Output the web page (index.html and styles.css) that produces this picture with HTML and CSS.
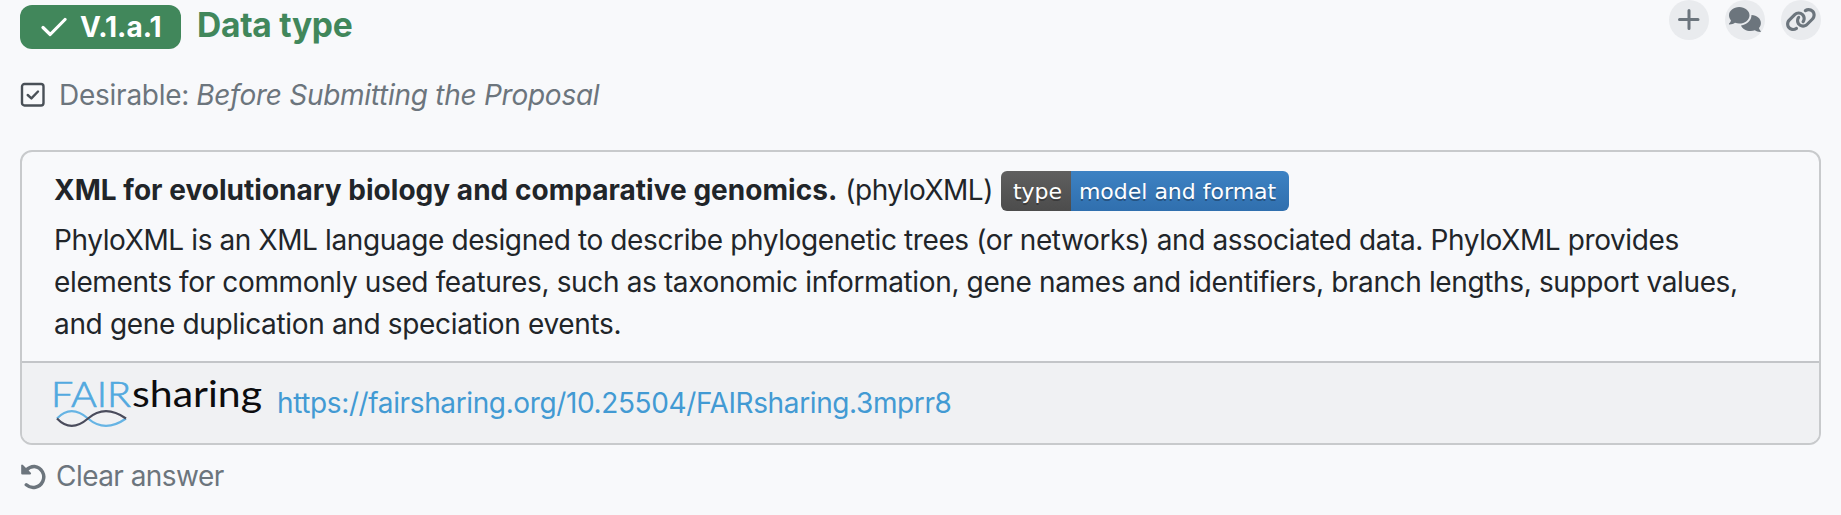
FILE: index.html
```html
<!DOCTYPE html>
<html lang="en">
<head>
<meta charset="utf-8">
<title>Data type</title>
<link rel="stylesheet" href="styles.css">
</head>
<body>
<main class="question">
  <header class="head">
    <span class="number"><svg class="check" viewBox="0 0 26 20"><path d="M2 10.500L9.200 17.500L24 2.500"/></svg><span class="number-text">V.1.a.1</span></span>
    <h1 class="title"><span class="title-text">Data type</span></h1>
    <nav class="actions">
      <a class="action"><svg viewBox="0 0 40 40"><path class="line" d="M20 10.500V28.500M10.500 19.500H29"/></svg></a>
      <a class="action"><svg viewBox="0 0 40 40"><path class="fill" d="M14.200 7C8.600 7 4 10.700 4 15.300c0 2 .8 3.700 2 5.100-.3 1.200-1 2.200-1.900 3-.4.500-.1 1.100.5 1.100 2.100 0 4-.8 5.400-1.700 1.300.5 2.700.8 4.200.8 5.700 0 10.300-3.700 10.300-8.300S19.900 7 14.200 7z"/><path class="fill" d="M26.500 15.100c0 5.500-4.700 9.900-10.500 10.400 1.300 3.200 5.200 5.600 9.700 5.600 1.600 0 3-.3 4.200-.8 1.500 1 3.300 1.700 5.300 1.700.6 0 .8-.6.4-1.100-.8-.8-1.400-1.800-1.700-2.900 1.300-1.400 2-3.200 2-5.100 0-4.100-4-7.600-9.400-7.800z"/></svg></a>
      <a class="action"><svg viewBox="0 0 40 40"><path class="fill" transform="translate(4.200 7) scale(.049)" d="M579.800 267.700c56.500-56.500 56.500-148 0-204.500c-50-50-128.800-56.500-186.300-15.400l-1.600 1.100c-14.400 10.300-17.700 30.300-7.400 44.600s30.300 17.700 44.600 7.400l1.600-1.100c32.100-22.900 76-19.300 103.800 8.600c31.500 31.500 31.500 82.500 0 114L422.300 334.800c-31.500 31.500-82.500 31.500-114 0c-27.900-27.900-31.500-71.800-8.600-103.800l1.100-1.600c10.300-14.400 6.900-34.400-7.400-44.600s-34.400-6.900-44.600 7.400l-1.100 1.600C206.500 251.200 213 330 263 380c56.500 56.500 148 56.500 204.500 0L579.800 267.700zM60.200 244.300c-56.500 56.500-56.500 148 0 204.500c50 50 128.800 56.500 186.300 15.400l1.600-1.100c14.400-10.300 17.700-30.300 7.400-44.600s-30.300-17.700-44.600-7.400l-1.600 1.100c-32.100 22.900-76 19.300-103.800-8.600C74 372 74 321 105.500 289.500L217.700 177.200c31.500-31.500 82.500-31.500 114 0c27.900 27.900 31.500 71.800 8.600 103.900l-1.100 1.600c-10.300 14.400-6.900 34.400 7.400 44.600s34.400 6.900 44.600-7.400l1.100-1.600C433.500 260.800 427 182 377 132c-56.500-56.500-148-56.500-204.500 0L60.200 244.300z"/></svg></a>
    </nav>
  </header>
  <p class="phase">
    <svg class="box" viewBox="0 0 26 26"><rect x="2" y="2" width="21.500" height="21.500" rx="2.500"/><path d="M7.700 13L11.400 16.400L18 9.500"/></svg>
    <span class="phase-label">Desirable:</span><em class="phase-name">Before Submitting the Proposal</em>
  </p>
  <article class="card">
    <div class="body">
      <div class="name"><strong class="name-text">XML for evolutionary biology and comparative genomics.</strong><span class="abbr">(phyloXML)</span><span class="badge"><span class="badge-key">type</span><span class="badge-value">model and format</span></span></div>
      <p class="description"><span class="l1">PhyloXML is an XML language designed to describe phylogenetic trees (or networks) and associated data. PhyloXML provides</span><span class="l2">elements for commonly used features, such as taxonomic information, gene names and identifiers, branch lengths, support values,</span><span class="l3">and gene duplication and speciation events.</span></p>
    </div>
    <footer class="source">
      <svg class="logo" viewBox="0 0 210 60">
        <text class="fair" x="-2" y="34" textLength="80" lengthAdjust="spacingAndGlyphs">FAIR</text>
        <text class="sharing" x="79" y="34" textLength="130" lengthAdjust="spacingAndGlyphs">sharing</text>
        <path class="wave-blue" d="M4 45.500C14 35 24 36 35 45.500S58 56 73 45.500"/>
        <path class="wave-dark" d="M4 45.500C14 56 24 55 35 45.500S58 35 73 45.500"/>
      </svg>
      <a class="link">https://fairsharing.org/10.25504/FAIRsharing.3mprr8</a>
    </footer>
  </article>
  <a class="clear"><svg class="undo" viewBox="0 0 27 26"><path class="arc" d="M6 6.500C9 3.200 12 2.400 14.500 2.500A10.500 10.500 0 1 1 6.300 20.800"/><path class="tip" d="M1.200 1.500V9.500Q1.200 10.500 2.300 10.500H10.300Q11.700 10 10.800 8.700L3 .9Q1.500 0 1.200 1.500z"/></svg><span class="clear-text">Clear answer</span></a>
</main>
</body>
</html>
```
FILE: styles.css
```css
* { box-sizing: border-box; }
body {
  margin: 0;
  background: #f8f9fb;
  color: #212529;
  font: 28px/42px Inter, "Liberation Sans", sans-serif;
}
svg { display: block; flex: none; }
span, em, strong, a { white-space: nowrap; }
.question { padding: 5px 20px 0; height: 515px; overflow: hidden; }
.head { display: flex; align-items: flex-start; height: 44px; }
.number {
  display: flex; align-items: center;
  width: 161px; height: 44px; padding-left: 21px;
  border-radius: 12px; background: #41875b; color: #fff; font-weight: 700;
}
.check { width: 26px; height: 20px; margin-right: 13px; }
.check path { fill: none; stroke: #fff; stroke-width: 3.200; stroke-linecap: round; stroke-linejoin: round; }
.title { margin: 0 0 0 16px; font-size: 33.600px; line-height: 40px; font-weight: 700; letter-spacing: -.3px; color: #41875b; }
.actions { display: flex; gap: 16px; margin: -5px 0 0 auto; }
.action { width: 40px; height: 40px; border-radius: 50%; background: #e9ebee; }
.line { fill: none; stroke: #6c757d; stroke-width: 3; stroke-linecap: round; }
.fill { fill: #6c757d; }
.phase { display: flex; align-items: center; margin: 25px 0 34px; color: #6c757d; }
.box { width: 26px; height: 26px; margin-right: 13px; }
.box rect, .box path { fill: none; stroke: #495057; stroke-width: 2.400; stroke-linecap: round; stroke-linejoin: round; }
.phase-label { letter-spacing: -.25px; }
.phase-name { margin-left: 7px; letter-spacing: -.27px; }
.card { border: 2px solid #c8cacc; border-radius: 12px; overflow: hidden; height: 295px; }
.body { height: 209px; padding: 16px 32px 0; }
.name { display: flex; align-items: center; height: 46px; line-height: 40px; }
.name-text { letter-spacing: .03px; }
.name-text, .abbr { padding-bottom: 2px; }
.abbr { margin-left: 8px; letter-spacing: -.5px; }
.badge {
  display: flex; width: 288px; height: 40px; margin-left: 8px;
  border-radius: 6px; overflow: hidden;
  font: 22px/42px "DejaVu Sans", sans-serif; color: #fff;
  text-shadow: 0 2px 0 rgba(1, 1, 1, .3);
}
.badge-key { width: 70px; padding-left: 12px; background: linear-gradient(#5f5f5f, #4c4c4c); }
.badge-value { flex: 1; padding-left: 8px; background: linear-gradient(#3d82c3, #306fae); }
.description { display: flex; flex-direction: column; align-items: flex-start; margin: 5px 0 0; }
.l1 { letter-spacing: -.39px; }
.l2 { letter-spacing: -.365px; }
.l3 { letter-spacing: -.34px; }
.source {
  display: flex; align-items: center; height: 82px;
  border-top: 2px solid #c3c5c8; background: #f0f1f3; padding-left: 31px;
}
.logo { width: 210px; height: 60px; margin-right: 14px; overflow: visible; }
.logo text { font: 36px Lato, sans-serif; }
.logo .fair { font-weight: 300; fill: #52a9df; stroke: #52a9df; stroke-width: .7; }
.logo .sharing { fill: #0c0c0e; }
.wave-dark, .wave-blue { fill: none; stroke-width: 2.200; }
.wave-dark { stroke: #4a4c5c; }
.wave-blue { stroke: #66b4e4; }
.link { color: #429ad3; letter-spacing: -.38px; }
.clear { display: flex; align-items: center; width: 210px; margin-top: 11px; color: #6c757d; }
.undo { width: 27px; height: 26px; margin-right: 9px; }
.arc { fill: none; stroke: #6c757d; stroke-width: 3.500; stroke-linecap: round; }
.tip { fill: #6c757d; }
.clear-text { letter-spacing: -.55px; line-height: 40px; margin-bottom: 2px; }
```
